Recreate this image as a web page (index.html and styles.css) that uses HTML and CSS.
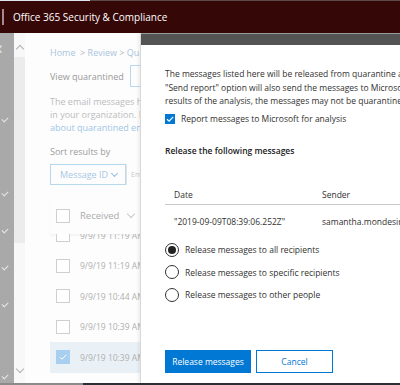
FILE: index.html
```html
<!DOCTYPE html>
<html lang="en">
<head>
    <meta charset="UTF-8">
    <title>Office 365 Security &amp; Compliance</title>
    <link rel="stylesheet" href="styles.css">
</head>
<body>
    <div class="topline"><div class="topline-tab"></div></div>
    <div class="header">
        <div class="header-sep"></div>
        <div class="header-title">Office 365 Security &amp; Compliance</div>
    </div>
    <div class="main">
        <div class="nav">
            <div class="nav-back">&lsaquo;</div>
            <div class="nav-check c1"></div>
            <div class="nav-check c2"></div>
            <div class="nav-check c3"></div>
            <div class="nav-check c3"></div>
            <div class="nav-check c3"></div>
            <div class="nav-check c4"></div>
        </div>
        <div class="scroll">
            <div class="scroll-arrow up"></div>
            <div class="scroll-thumb"></div>
            <div class="scroll-fill"></div>
            <div class="scroll-arrow down"></div>
        </div>
        <div class="page">
            <div class="crumbs"><span class="crumb-link">Home</span> <span class="crumb-sep">&nbsp;&gt;</span> <span class="crumb-link">Review</span> <span class="crumb-sep">&gt;</span> <span class="crumb-link">Quarantine</span></div>
            <div class="view-row">
                <span class="view-label">View quarantined</span>
                <span class="view-box"></span>
            </div>
            <div class="page-text">The email messages here have been quarantined<br>in your organization. Read more<br><span class="page-link">about quarantined email messages</span></div>
            <div class="sort-label">Sort results by</div>
            <div class="sort-row">
                <div class="sort-select">Message ID <span class="chev"></span></div>
                <div class="sort-input">Enter</div>
            </div>
            <div class="list-head">
                <span class="cbox"></span>
                <span class="list-col">Received</span>
                <span class="chev gray"></span>
            </div>
            <div class="list">
                <div class="list-inner">
                    <div class="row"><span class="cbox"></span><span class="row-date">9/9/19 11:19 AM</span></div>
                    <div class="row"><span class="cbox"></span><span class="row-date">9/9/19 11:19 AM</span></div>
                    <div class="row"><span class="cbox"></span><span class="row-date">9/9/19 10:44 AM</span></div>
                    <div class="row"><span class="cbox"></span><span class="row-date">9/9/19 10:39 AM</span></div>
                    <div class="row selected">
                        <span class="cbox checked">
                            <svg width="12" height="12" viewBox="0 0 12 12"><path d="M3 6.2 L5 8.2 L9.3 3.8" fill="none" stroke="#fff" stroke-width="1"/></svg>
                        </span>
                        <span class="row-date">9/9/19 10:39 AM</span>
                    </div>
                </div>
            </div>
        </div>
        <div class="panel">
            <div class="panel-bar"></div>
            <div class="panel-body">
                <p class="intro">
                    <span>The messages listed here will be released from quarantine and delivered. The</span>
                    <span>"Send report" option will also send the messages to Microsoft for analysis. Based on the</span>
                    <span>results of the analysis, the messages may not be quarantined in the future.</span>
                </p>
                <label class="check-row">
                    <span class="check-box">
                        <svg width="10" height="10" viewBox="0 0 10 10"><path d="M2 5.2 L4.1 7.2 L8.2 2.8" fill="none" stroke="#fff" stroke-width="1.2"/></svg>
                    </span>
                    Report messages to Microsoft for analysis
                </label>
                <h3 class="section-title">Release the following messages</h3>
                <div class="msg-table">
                    <div class="msg-head">
                        <span class="col-date">Date</span>
                        <span class="col-sender">Sender</span>
                    </div>
                    <div class="msg-row">
                        <span class="col-date">"2019-09-09T08:39:06.252Z"</span>
                        <span class="col-sender">samantha.mondesir@contoso.com</span>
                    </div>
                </div>
                <div class="radios">
                    <label class="radio-row"><span class="radio on"></span>Release messages to all recipients</label>
                    <label class="radio-row"><span class="radio"></span>Release messages to specific recipients</label>
                    <label class="radio-row"><span class="radio"></span>Release messages to other people</label>
                </div>
                <div class="actions">
                    <button class="btn primary">Release messages</button>
                    <button class="btn">Cancel</button>
                </div>
            </div>
        </div>
    </div>
    <div class="bottom"><div class="bottom-left"></div></div>
</body>
</html>
```
FILE: styles.css
```css
body {
    margin: 0;
    width: 400px;
    height: 385px;
    overflow: hidden;
    font-family: "Open Sans", "Liberation Sans", sans-serif;
    background-color: #fff;
    color: #333;
}
.topline {
    height: 1px;
    background-color: #5a4a4a;
}
.topline-tab {
    width: 90px;
    height: 1px;
    background-color: #dde6ee;
}
.header {
    height: 32px;
    background-color: #360707;
    display: flex;
    align-items: center;
}
.header-sep {
    width: 2px;
    height: 16px;
    margin-left: 2px;
    background-color: #a58c8c;
}
.header-title {
    margin-left: 9px;
    color: #fff;
    font-size: 10px;
}
.main {
    display: flex;
    height: 350px;
    overflow: hidden;
}
.nav {
    width: 14px;
    flex: none;
    background-color: #a9a9a9;
    overflow: hidden;
}
.nav-back {
    color: #e8e8e8;
    font-size: 18px;
    line-height: 14px;
    margin-top: 7px;
    margin-left: -3px;
}
.nav-check {
    width: 5px;
    height: 3px;
    border-left: 1px solid #e6e6e6;
    border-bottom: 1px solid #e6e6e6;
    transform: rotate(-45deg);
    margin-left: 2px;
}
.nav-check.c1 {
    margin-top: 63px;
}
.nav-check.c2 {
    margin-top: 70px;
}
.nav-check.c3 {
    margin-top: 33px;
}
.nav-check.c4 {
    margin-top: 68px;
}
.scroll {
    width: 11px;
    flex: none;
    background-color: #f8f8f8;
    display: flex;
    flex-direction: column;
    align-items: center;
}
.scroll-arrow {
    width: 5px;
    height: 5px;
    border-left: 1px solid #b0b0b0;
    border-top: 1px solid #b0b0b0;
    flex: none;
}
.scroll-arrow.up {
    transform: rotate(45deg);
    margin-top: 13px;
}
.scroll-arrow.down {
    transform: rotate(-135deg);
    margin-bottom: 11px;
}
.scroll-thumb {
    width: 11px;
    height: 186px;
    margin-top: 5px;
    background-color: #ececec;
}
.scroll-fill {
    flex: 1;
}
.page {
    width: 115px;
    flex: none;
    padding-left: 25px;
    box-sizing: border-box;
    overflow: hidden;
    white-space: nowrap;
    font-size: 9px;
    color: #a8a8a8;
    background-color: #fdfdfd;
}
.crumbs {
    margin-top: 12px;
    line-height: 16px;
}
.crumb-link {
    color: #a9c4dd;
}
.crumb-sep {
    color: #b5b5b5;
}
.view-row {
    display: flex;
    align-items: center;
    margin-top: 4px;
    height: 22px;
}
.view-label {
    color: #999;
    width: 80px;
    flex: none;
}
.view-box {
    width: 20px;
    height: 20px;
    border: 1px solid #bcd9ef;
    flex: none;
}
.page-text {
    margin-top: 8px;
    line-height: 13px;
    color: #bcbcbc;
}
.page-link {
    color: #9dc6e6;
}
.sort-label {
    margin-top: 10px;
    line-height: 16px;
    color: #9c9c9c;
}
.sort-row {
    display: flex;
    margin-top: 4px;
    height: 21px;
}
.sort-select {
    width: 76px;
    flex: none;
    box-sizing: border-box;
    border: 1px solid #b8d8f0;
    color: #a5c8e6;
    padding-left: 9px;
    line-height: 19px;
}
.sort-input {
    flex: none;
    padding-left: 4px;
    border-left: 1px solid #e4e4e4;
    font-size: 7px;
    line-height: 21px;
    color: #c8c8c8;
}
.chev {
    display: inline-block;
    width: 4px;
    height: 4px;
    border-right: 1px solid #8fbde3;
    border-bottom: 1px solid #8fbde3;
    transform: rotate(45deg);
    margin-left: 2px;
    vertical-align: 2px;
}
.chev.gray {
    border-color: #c8c8c8;
    width: 5px;
    height: 5px;
    margin-left: 9px;
    margin-top: -4px;
}
.list-head {
    display: flex;
    align-items: center;
    height: 35px;
    margin-top: 14px;
    padding-left: 6px;
    padding-bottom: 2px;
    box-sizing: border-box;
    box-shadow: 0 2px 2px rgba(0, 0, 0, 0.04);
}
.cbox {
    width: 12px;
    height: 12px;
    border: 1px solid #cfcfcf;
    flex: none;
    display: flex;
    background-color: #fff;
}
.list-col {
    margin-left: 10px;
    color: #ababab;
    font-size: 9.5px;
}
.list {
    height: 149px;
    overflow: hidden;
}
.list-inner {
    margin-top: -14px;
}
.row {
    display: flex;
    align-items: center;
    height: 30.5px;
    padding-left: 6px;
}
.row-date {
    margin-left: 10px;
    font-size: 8.5px;
    color: #b0b0b0;
}
.row.selected {
    background-color: #e9f1f6;
}
.cbox.checked {
    background-color: #a9cff0;
    border-color: #a9cff0;
}
.panel {
    width: 330px;
    flex: none;
    background-color: #fff;
    border-left: 1px solid #d8d8d8;
    box-shadow: -2px 0 3px rgba(0, 0, 0, 0.06);
}
.panel-bar {
    height: 11px;
    background-color: #545454;
    border-top: 1px solid #9a9a9a;
}
.panel-body {
    padding: 22px 0 0 24px;
    white-space: nowrap;
    font-size: 8.5px;
    color: #323130;
}
.intro {
    margin: 0;
    line-height: 13.5px;
}
.intro span {
    display: block;
}
.check-row {
    display: flex;
    align-items: center;
    margin-top: 4px;
    height: 14px;
}
.check-box {
    width: 10px;
    height: 10px;
    background-color: #0078d4;
    display: flex;
    margin-right: 6px;
}
.section-title {
    margin: 18px 0 0 0;
    font-size: 8.5px;
    font-weight: 600;
    line-height: 14px;
    color: #222;
}
.msg-table {
    margin-top: 30px;
}
.msg-head {
    display: flex;
    height: 14px;
    line-height: 14px;
    padding-bottom: 2px;
    border-bottom: 1px solid #c8c8c8;
}
.msg-row {
    display: flex;
    line-height: 14px;
    margin-top: 10px;
}
.col-date {
    width: 148px;
    padding-left: 9px;
    flex: none;
}
.radios {
    margin-top: 14px;
    display: flex;
    flex-direction: column;
    gap: 8.5px;
}
.radio-row {
    display: flex;
    align-items: center;
    height: 14px;
}
.radio {
    width: 12px;
    height: 12px;
    border: 1px solid #333;
    border-radius: 50%;
    margin-right: 6px;
    flex: none;
    display: flex;
    align-items: center;
    justify-content: center;
}
.radio.on::after {
    content: "";
    width: 8px;
    height: 8px;
    border-radius: 50%;
    background-color: #222;
}
.actions {
    display: flex;
    gap: 5px;
    margin-top: 48px;
}
.btn {
    height: 23px;
    width: 77px;
    border: 1px solid #0078d4;
    background-color: #fff;
    color: #0078d4;
    font-family: "Open Sans", "Liberation Sans", sans-serif;
    font-size: 8.5px;
    padding: 0;
}
.btn.primary {
    width: 86px;
    background-color: #0078d4;
    color: #fff;
}
.bottom {
    height: 2px;
    background-color: #2b2f35;
}
.bottom-left {
    width: 83px;
    height: 2px;
    background-color: #8a8a8a;
}
```
